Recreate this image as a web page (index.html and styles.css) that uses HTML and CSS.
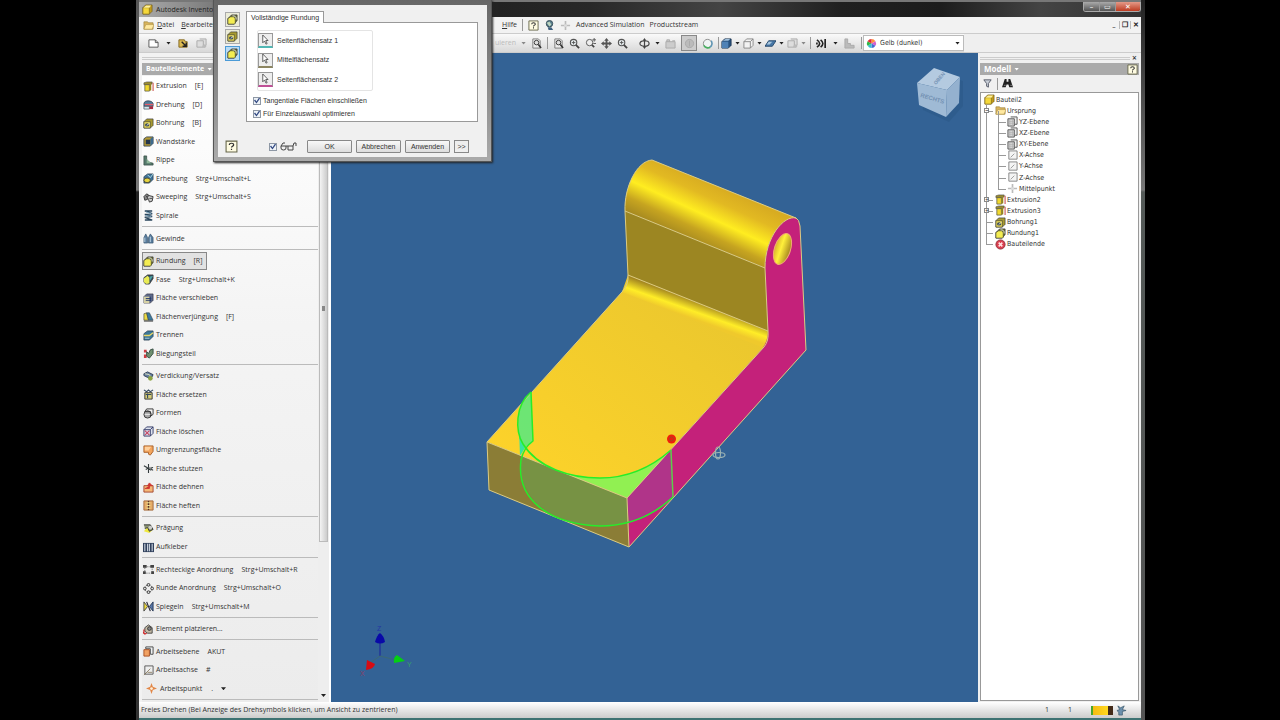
FILE: index.html
```html
<!DOCTYPE html>
<html lang="de">
<head>
<meta charset="utf-8">
<title>Autodesk Inventor</title>
<link rel="stylesheet" href="styles.css">
</head>
<body>
<svg class="defs" aria-hidden="true">
<defs>
<symbol id="box" viewBox="0 0 12 12"><path d="M1 4l3-3h7v7l-3 3H1z" fill="#c09a1c" stroke="#6b571a" stroke-width=".7"/><path d="M1 4h7v7H1z" fill="#f5d83a" stroke="#7a651c" stroke-width=".7"/><path d="M1.500 4l3-2.500h5.500L8 4z" fill="#fff29a"/></symbol>
<symbol id="extrude" viewBox="0 0 12 12"><path d="M1 2l3-1h6v2L8 4H1z" fill="#9a8c31" stroke="#444" stroke-width=".6"/><path d="M2 4h5v7H2z" fill="#f1d82e" stroke="#554" stroke-width=".8"/><path d="M7 4l2-1v7l-2 1z" fill="#98841d"/><path d="M11 2v9" stroke="#c55" stroke-width="1.200"/></symbol>
<symbol id="revolve" viewBox="0 0 12 12"><path d="M1 5c0-4 9-4 10 0v3H1z" fill="#4d7f9c" stroke="#334" stroke-width=".8"/><path d="M2 6h9" stroke="#e75d68" stroke-width="1.500"/><path d="M1 8h6v3H1z" fill="#d8e8ef" stroke="#345" stroke-width=".7"/><path d="M7 8h4v3H7z" fill="#a82b41"/></symbol>
<symbol id="hole" viewBox="0 0 12 12"><path d="M1 4l3-3h7v7l-3 3H1z" fill="#a89a30" stroke="#333" stroke-width=".7"/><path d="M1 4h7v7H1z" fill="#e6d75a" stroke="#443" stroke-width=".7"/><ellipse cx="4.500" cy="7.500" rx="2.300" ry="1.900" fill="#394958"/><path d="M4 8l3-2" stroke="#fff" stroke-width=".8"/></symbol>
<symbol id="shell" viewBox="0 0 12 12"><path d="M1 3l3-2h7v7l-3 3H1z" fill="#b59b36" stroke="#2d3b48" stroke-width=".9"/><path d="M3 4h5v5H3z" fill="#24364b"/><path d="M8 3l3-2v7L8 11z" fill="#3d6a8e"/></symbol>
<symbol id="rib" viewBox="0 0 12 12"><path d="M1 1h3v5l3 2 4 1v2H1z" fill="#55796c" stroke="#354b44" stroke-width=".8"/><path d="M4 4l5 5H4z" fill="#8fb79a"/></symbol>
<symbol id="loft" viewBox="0 0 12 12"><path d="M1 4l4-3h6v6l-4 4H1z" fill="#3d7298" stroke="#2a3e50" stroke-width=".8"/><ellipse cx="4.500" cy="8" rx="3.500" ry="2.500" fill="#e6d540" stroke="#443"/><path d="M5 2l3 3 3-4" fill="none" stroke="#b8e0e8"/></symbol>
<symbol id="sweep" viewBox="0 0 12 12"><path d="M1 5l3-3 3 2-2 4-3 1z" fill="#888" stroke="#333"/><path d="M4 5l3-1 4 1-1 5-3 1-1-3z" fill="#ccc" stroke="#333"/><path d="M7 7h3M3 4l2 2" stroke="#444"/></symbol>
<symbol id="coil" viewBox="0 0 12 12"><path d="M10 1H2l8 3-8 1 8 2-8 1 8 3H2" fill="none" stroke="#28445b" stroke-width="1.600"/><path d="M3 2l6 2M3 6l6 1" stroke="#87b0c8"/></symbol>
<symbol id="thread" viewBox="0 0 12 12"><path d="M1 11V5l2-4 2 4v6zM6 11V5l2-4 3 4v6z" fill="#587c9d" stroke="#34516b" stroke-width=".7"/><path d="M2 5v5M8 4v6" stroke="#bfd4e2"/></symbol>
<symbol id="fillet" viewBox="0 0 12 12"><path d="M1 5l4-4h6v6l-3 4H1z" fill="#6f7436" stroke="#333" stroke-width=".8"/><path d="M1 5l3-2h3l2 2v5l-1 1H1z" fill="#f4ed52" stroke="#443" stroke-width=".7"/><path d="M6 2c4 0 4 2 4 4" fill="none" stroke="#eee"/></symbol>
<symbol id="chamfer" viewBox="0 0 12 12"><path d="M1 4l4-3h6v4l-4 6H3l-2-2z" fill="#34495a" stroke="#333" stroke-width=".8"/><path d="M1 5l4-3 2 2v6l-3 1-3-2z" fill="#e9eb54"/><path d="M7 3l4-1-3 5z" fill="#48a1a3"/></symbol>
<symbol id="move" viewBox="0 0 12 12"><path d="M1 4l3-3h7v7l-3 3H1z" fill="#5e6a8a" stroke="#334" stroke-width=".7"/><path d="M1 4h6v7H1z" fill="#d5d0a4"/><path d="M3 6h6M3 8h6M8 4v5" stroke="#263c6b"/></symbol>
<symbol id="draft" viewBox="0 0 12 12"><path d="M1 10V3l3-1 2 8z" fill="#e9d946" stroke="#443" stroke-width=".7"/><path d="M4 2h3l4 8H6z" fill="#3c7b9e" stroke="#345" stroke-width=".7"/><path d="M1 11h10" stroke="#333"/></symbol>
<symbol id="split" viewBox="0 0 12 12"><path d="M1 4l4-3h6v6l-4 4H1z" fill="#3a7798" stroke="#263e53" stroke-width=".8"/><path d="M1 6h6l4-3" stroke="#e7d665" stroke-width="1.500" fill="none"/><path d="M2 9h5" stroke="#afc8d6"/></symbol>
<symbol id="bend" viewBox="0 0 12 12"><path d="M1 2h3v3H1zM1 7h3v4H1z" fill="#ce3d42"/><path d="M4 4l2 2 2-4 3-1v5l-4 5-3-2z" fill="#6e8f6f" stroke="#354b41"/></symbol>
<symbol id="thicken" viewBox="0 0 12 12"><path d="M1 3l4-2 6 3-2 4-4-1-4-2z" fill="#657da0" stroke="#2d3d52"/><path d="M2 3l5 1 3 6" stroke="#dce3bb" fill="none"/><circle cx="8" cy="8" r="2.500" fill="#8ca444"/></symbol>
<symbol id="replace" viewBox="0 0 12 12"><path d="M2 4h8v7H2z" fill="#d4cc78" stroke="#333"/><path d="M1 1l3 2 2-2 2 2 3-2M3 6h6M5 5v5" fill="none" stroke="#344a61" stroke-width="1.200"/></symbol>
<symbol id="form" viewBox="0 0 12 12"><circle cx="5" cy="7" r="4" fill="#aaa" stroke="#333"/><path d="M4 1h7v6l-3 2V4H2z" fill="none" stroke="#333"/><path d="M2 7h6" stroke="#eee"/></symbol>
<symbol id="delete" viewBox="0 0 12 12"><path d="M1 4l3-3h7v7l-3 3H1zM1 4h7v7M8 4l3-3" fill="#dbe0ed" stroke="#343c68"/><path d="M2 5l5 5M7 5l-5 5" stroke="#c64764" stroke-width="1.300"/></symbol>
<symbol id="patch" viewBox="0 0 12 12"><path d="M1 1h10v6l-3 4-2-1V8H1z" fill="#f3a55d" stroke="#a75f29"/><path d="M2 2h7L6 6H2z" fill="#ffd09c"/></symbol>
<symbol id="trim" viewBox="0 0 12 12"><path d="M1 3l5 3 5-1M6 1v10M3 4l6 4M3 7l4-2 4 3" fill="none" stroke="#343b3d" stroke-width="1.200"/><path d="M6 5l3-1-1 3z" fill="#aaa"/></symbol>
<symbol id="extend" viewBox="0 0 12 12"><path d="M1 4h10v7H1z" fill="#f5b878" stroke="#a3442e"/><path d="M2 7h5V4M5 4l2-3 3 3z" fill="#cf342f" stroke="#cf342f"/></symbol>
<symbol id="stitch" viewBox="0 0 12 12"><path d="M1 1h10v10H1z" fill="#e5ad68" stroke="#a16538"/><path d="M6 1v10" stroke="#543027" stroke-width="1.500"/><path d="M4 3h4M4 6h4M4 9h4" stroke="#f3eb99"/></symbol>
<symbol id="emboss" viewBox="0 0 12 12"><path d="M1 9l5-6 5 4-4 4z" fill="#eee83d"/><path d="M1 2h7l3 5-4 2-2-4-3 1" fill="#8d9678" stroke="#333"/><circle cx="8" cy="5" r="2" fill="#ccc"/></symbol>
<symbol id="decal" viewBox="0 0 12 12"><path d="M0 1h12v10H0z" fill="#31415d"/><path d="M2 2v8M5 2v8M7 2v8M10 2v8" stroke="#cdd5e0" stroke-width="1.200"/></symbol>
<symbol id="rect" viewBox="0 0 12 12"><path d="M2 3h8v7H2z" fill="none" stroke="#777" stroke-dasharray="1.500 1"/><path d="M0 1h4v3H0zM8 1h4v3H8zM0 8h3v3H0zM9 8h3v3H9z" fill="#444"/></symbol>
<symbol id="circular" viewBox="0 0 12 12"><circle cx="6" cy="6" r="4" fill="none" stroke="#444" stroke-dasharray="2 1"/><g fill="#ddd" stroke="#333"><circle cx="6" cy="2" r="1.500"/><circle cx="10" cy="6" r="1.500"/><circle cx="6" cy="10" r="1.500"/><circle cx="2" cy="6" r="1.500"/></g></symbol>
<symbol id="mirror" viewBox="0 0 12 12"><path d="M1 1l4 5-4 5z" fill="#f0dc3d" stroke="#444"/><path d="M11 1L7 6l4 5z" fill="#5776a8" stroke="#263955"/><path d="M4 1l4 10" stroke="#223" stroke-width="1.200"/></symbol>
<symbol id="place" viewBox="0 0 12 12"><path d="M2 4l4-3 4 3v6H5L2 8z" fill="#c7bca6" stroke="#444"/><circle cx="7" cy="5" r="2" fill="#888" stroke="#333"/><path d="M1 6v5M0 9l2 2 2-1" stroke="#c22" fill="none" stroke-width="1.300"/></symbol>
<symbol id="plane" viewBox="0 0 12 12"><path d="M3 1h8v8H8V3H3z" fill="#edf1f2" stroke="#444"/><path d="M1 4h6v7H1z" fill="#f1a263" stroke="#a64e20"/></symbol>
<symbol id="axis" viewBox="0 0 12 12"><path d="M2 1h9v9H2z" fill="#eee" stroke="#555"/><path d="M1 11l7-7M5 8h5" stroke="#764" stroke-width=".8"/></symbol>
<symbol id="point" viewBox="0 0 12 12"><path d="M6 0l1.500 4L12 6 7.500 7.500 6 12 4.500 7.500 0 6l4.500-2z" fill="#e28748"/><circle cx="6" cy="6" r="1.500" fill="#fff0d8"/></symbol>
<symbol id="gplane" viewBox="0 0 12 12"><path d="M4 1h7v8H8" fill="#eee" stroke="#555"/><path d="M1 3h7v8H1z" fill="#d3d3d3" stroke="#555"/><path d="M3 3v8M6 3v8M1 6h7M1 8h7" stroke="#aaa" stroke-width=".6"/></symbol>
<symbol id="gaxis" viewBox="0 0 12 12"><path d="M2 1h9v9H2z" fill="#f4f4f4" stroke="#666" stroke-width=".8"/><path d="M4 8l4-4" stroke="#999"/></symbol>
<symbol id="plus" viewBox="0 0 12 12"><path d="M6 1v10M1 6h10" stroke="#bbb" stroke-width="1.800"/><circle cx="6" cy="6" r="1.500" fill="#ddd"/></symbol>
<symbol id="folder" viewBox="0 0 12 12"><path d="M1 2h4l1 1h5v7H1z" fill="#d9b45c" stroke="#99803b" stroke-width=".7"/><path d="M1 10l2-5h9l-2 5z" fill="#ffe9a0" stroke="#a78a42" stroke-width=".6"/></symbol>
<symbol id="end" viewBox="0 0 12 12"><circle cx="6" cy="6" r="5" fill="#dc4050" stroke="#91313b"/><path d="M4 4l4 4M8 4l-4 4" stroke="#ffe2e2" stroke-width="1.700"/></symbol>
<symbol id="help" viewBox="0 0 12 12"><path d="M1 1h10v10H1z" fill="#fffce2" stroke="#66664a"/><path d="M4 4.500c0-2 4-2 4 0 0 1.300-2 1-2 2.500M6 8v1.200" fill="none" stroke="#333" stroke-width="1.100"/></symbol>
<symbol id="page" viewBox="0 0 12 12"><path d="M1 2h7l3 3v5H1z" fill="#fff" stroke="#555"/><path d="M8 2v3h3" fill="none" stroke="#555"/></symbol>
<symbol id="open" viewBox="0 0 12 12"><path d="M1 2h6l1 2h2v6H1z" fill="#ddbb52" stroke="#80651e"/><path d="M4 4l5 5M9 5v4H5" fill="none" stroke="#222" stroke-width="1.500"/></symbol>
<symbol id="globe" viewBox="0 0 12 12"><circle cx="6" cy="4" r="3.500" fill="#5b8190" stroke="#334a55"/><path d="M3 3l3-1 2 3-2 2z" fill="#bfd6c0"/><path d="M4 8h4l2 3H5z" fill="#3e5f7f"/></symbol>
<symbol id="zoomer" viewBox="0 0 12 12"><circle cx="5" cy="5" r="3.500" fill="#e9eff1" stroke="#555" stroke-width="1.200"/><path d="M7.500 7.500L11 11" stroke="#444" stroke-width="2"/><path d="M3 5h4M5 3v4" stroke="#555"/></symbol>
<symbol id="zoomplus" viewBox="0 0 12 12"><circle cx="5" cy="5" r="3.500" fill="#eee" stroke="#555"/><path d="M7.500 7.500L10 10" stroke="#444" stroke-width="1.800"/><path d="M8 2h4M10 0v4M9 6h3" stroke="#555"/></symbol>
<symbol id="zoompage" viewBox="0 0 12 12"><path d="M2 1h6l2 2v8H2z" fill="#ececec" stroke="#777"/><circle cx="6" cy="5" r="2.500" fill="#ddd" stroke="#333"/><path d="M8 7l3 4" stroke="#333" stroke-width="1.700"/></symbol>
<symbol id="pan" viewBox="0 0 12 12"><path d="M6 0l2.500 3H7v2h2V3.500L12 6 9 8.500V7H7v2h1.500L6 12 3.500 9H5V7H3v1.500L0 6l3-2.500V5h2V3H3.500z" fill="#555"/></symbol>
<symbol id="orbit" viewBox="0 0 12 12"><path d="M6 1v10M1 6c0-4 10-4 10 0S1 10 1 6" fill="none" stroke="#444" stroke-width="1.300"/><path d="M4 3l2-3 2 3zM4 9l2 3 2-3z" fill="#444"/></symbol>
<symbol id="camera" viewBox="0 0 12 12"><path d="M1 4h10v7H1zM2 4V2h3v2M8 3h3" fill="#ccc" stroke="#aaa"/></symbol>
<symbol id="ring" viewBox="0 0 12 12"><circle cx="6" cy="6" r="4.500" fill="#bbb" stroke="#aaa"/><path d="M6 3v6" stroke="#aaa"/></symbol>
<symbol id="sphere" viewBox="0 0 12 12"><circle cx="6" cy="6" r="4.500" fill="#eff4f4" stroke="#888"/><path d="M2 8a5 5 0 0 0 7 2" fill="none" stroke="#48af61" stroke-width="1.800"/><path d="M9 10a5 5 0 0 0 1-7" fill="none" stroke="#5995b8" stroke-width="1.500"/></symbol>
<symbol id="cube" viewBox="0 0 12 12"><path d="M1 4l3-3h7v7l-3 3H1z" fill="#28527f" stroke="#1d3652"/><path d="M1 4h7v7H1z" fill="#4f82b6"/><path d="M2 3l3-2h5L8 3z" fill="#a0c0dc"/></symbol>
<symbol id="wire" viewBox="0 0 12 12"><path d="M1 4l3-3h7v7l-3 3H1zM1 4h7v7M8 4l3-3" fill="#f2f2f2" stroke="#888"/></symbol>
<symbol id="sheet" viewBox="0 0 12 12"><path d="M4 3h8L8 9H0z" fill="#4677a7" stroke="#26486b"/><path d="M4 4h4L5 7H2z" fill="#abc8df"/></symbol>
<symbol id="gray" viewBox="0 0 12 12"><path d="M1 3h7v7H1zM4 1h7v7H8" fill="#ddd" stroke="#aaa"/><circle cx="9" cy="9" r="2" fill="#bbb"/></symbol>
<symbol id="waves" viewBox="0 0 12 12"><path d="M1 2q6 4 0 8M5 2q5 4 0 8M1 5v2M10 1v10" fill="none" stroke="#222" stroke-width="1.800"/></symbol>
<symbol id="steps" viewBox="0 0 12 12"><path d="M1 1h3v5h3v2h4v3H1z" fill="#bbb" stroke="#aaa"/></symbol>
<symbol id="wheel" viewBox="0 0 12 12"><path d="M6 6V1a5 5 0 0 1 4.300 2.500z" fill="#ff923b"/><path d="M6 6l4.300-2.500a5 5 0 0 1 0 5z" fill="#d45fce"/><path d="M6 6l4.300 2.500A5 5 0 0 1 6 11z" fill="#4668d2"/><path d="M6 6v5a5 5 0 0 1-4.300-2.500z" fill="#38bfd0"/><path d="M6 6L1.700 8.500a5 5 0 0 1 0-5z" fill="#32b847"/><path d="M6 6L1.700 3.500A5 5 0 0 1 6 1z" fill="#e72b36"/></symbol>
<symbol id="funnel" viewBox="0 0 12 12"><path d="M2 2h8L7 6v4L5 9V6z" fill="#c9cfd8" stroke="#555a68"/></symbol>
<symbol id="binoc" viewBox="0 0 12 12"><path d="M3 1h2v3h2V1h2l3 9H8L7 7H5l-1 3H0z" fill="#222"/><path d="M2 8h2M9 8h2" stroke="#888"/></symbol>
<symbol id="pick" viewBox="0 0 12 12"><path d="M3 0v8.500l2-2 1.500 3.500 1.300-.6L6.300 6h2.500z" fill="#fff" stroke="#333" stroke-width=".8"/></symbol>
<symbol id="glasses" viewBox="0 0 18 11"><path d="M1 5h5v2q0 2-2.500 2T1 7zM8 5h5v4H8zM6 5h2M1 5l2-3h2M13 5l1-3h2M16 2v3" fill="none" stroke="#444"/></symbol>
<symbol id="people" viewBox="0 0 12 12"><path d="M2 1l3 2 4-2-2 4 4 1-4 1v4H3V8L1 6l3-1z" fill="#6c90ac" stroke="#345166" stroke-width=".7"/></symbol>
<linearGradient id="roll" gradientUnits="userSpaceOnUse" x1="720" y1="187" x2="693" y2="245"><stop offset="0" stop-color="#d8ac21"/><stop offset=".22" stop-color="#e2b922"/><stop offset=".5" stop-color="#ffed20"/><stop offset=".75" stop-color="#c6a420"/><stop offset="1" stop-color="#a08420"/></linearGradient>
<linearGradient id="neck" gradientUnits="userSpaceOnUse" x1="700" y1="302" x2="694" y2="319"><stop offset="0" stop-color="#a38620"/><stop offset=".6" stop-color="#ffed27"/><stop offset="1" stop-color="#efc92c"/></linearGradient>
<linearGradient id="plate" x1="1" y1="0" x2="0" y2="1"><stop offset="0" stop-color="#e7c52f"/><stop offset="1" stop-color="#ffd429"/></linearGradient>
<linearGradient id="bore"><stop offset="0" stop-color="#d9b42c"/><stop offset=".4" stop-color="#fff03b"/><stop offset="1" stop-color="#a6871f"/></linearGradient>
</defs>
</svg>
<main class="desktop">
<div class="window">
<header class="titlebar"><span class="caption"><svg class="ic"><use href="#box"/></svg>Autodesk Inventor</span>
<div class="winctl"><button aria-label="Minimieren">–</button><button aria-label="Maximieren">▭</button><button class="close" aria-label="Schließen">✕</button></div></header>
<nav class="menubar">
<div class="menu-start"><svg class="ic"><use href="#folder"/></svg><button><u>D</u>atei</button><button><u>B</u>earbeiten</button></div>
<div class="menu-rest"><button><u>H</u>ilfe</button><i class="vsep"></i><button aria-label="Hilfe öffnen"><svg class="ic"><use href="#help"/></svg></button><button aria-label="Web"><svg class="ic"><use href="#globe"/></svg></button><button aria-label="Hinzufügen"><svg class="ic"><use href="#plus"/></svg></button><button>Advanced Simulation</button><button>Productstream</button></div>
<div class="docctl"><button aria-label="Dokument minimieren">_</button><i class="vsep"></i><button aria-label="Dokument wiederherstellen">❐</button><i class="vsep"></i><button aria-label="Dokument schließen">✕</button></div>
</nav>
<div class="toolbar">
<div class="tools-start"><button aria-label="Neu"><svg class="ic"><use href="#page"/></svg></button><i class="arrow"></i><button aria-label="Öffnen"><svg class="ic"><use href="#open"/></svg></button><button aria-label="Speichern"><svg class="ic"><use href="#gray"/></svg></button><button aria-label="Rückgängig"><svg class="ic"><use href="#cube"/></svg></button></div>
<div class="tools-view"><span class="faded">uieren</span><i class="arrow dim"></i><button aria-label="Auswahl"><svg class="ic"><use href="#zoompage"/></svg></button><i class="vsep"></i>
<button aria-label="Alles zoomen"><svg class="ic"><use href="#zoompage"/></svg></button><button aria-label="Fenster zoomen"><svg class="ic"><use href="#zoomer"/></svg></button><button aria-label="Zoom"><svg class="ic"><use href="#zoomplus"/></svg></button><button aria-label="Pan"><svg class="ic"><use href="#pan"/></svg></button><button aria-label="Auswahl zoomen"><svg class="ic"><use href="#zoomer"/></svg></button></div>
<div class="tools-more"><button aria-label="Drehen"><svg class="ic"><use href="#orbit"/></svg></button><i class="arrow"></i><button aria-label="Ansicht"><svg class="ic"><use href="#camera"/></svg></button><button class="pressed" aria-label="Freies Drehen"><svg class="ic"><use href="#ring"/></svg></button><button aria-label="Kugel"><svg class="ic"><use href="#sphere"/></svg></button><i class="vsep"></i></div>
<div class="tools-style"><button aria-label="Schattiert"><svg class="ic"><use href="#cube"/></svg></button><i class="arrow"></i><button aria-label="Drahtkörper"><svg class="ic"><use href="#wire"/></svg></button><i class="arrow"></i><button aria-label="Schatten"><svg class="ic"><use href="#sheet"/></svg></button><i class="arrow"></i><button aria-label="Komponenten"><svg class="ic"><use href="#gray"/></svg></button><i class="arrow dim"></i></div><i class="vsep"></i>
<div class="tools-end"><button aria-label="Analyse"><svg class="ic"><use href="#waves"/></svg></button><i class="arrow"></i><button aria-label="Stufen"><svg class="ic"><use href="#steps"/></svg></button><i class="vsep"></i></div>
<label class="color"><svg class="ic"><use href="#wheel"/></svg><select aria-label="Farbe"><option>Gelb (dunkel)</option></select><i class="arrow"></i></label>
</div>
<div class="work">
<aside class="features">
<div class="grip"></div><h2>Bauteilelemente<i class="arrow light"></i></h2>
<div class="feature-body"><div class="feature-list">
<button><svg class="ic"><use href="#extrude"/></svg>Extrusion<kbd>[E]</kbd></button>
<button><svg class="ic"><use href="#revolve"/></svg>Drehung<kbd>[D]</kbd></button>
<button><svg class="ic"><use href="#hole"/></svg>Bohrung<kbd>[B]</kbd></button>
<button><svg class="ic"><use href="#shell"/></svg>Wandstärke</button>
<button><svg class="ic"><use href="#rib"/></svg>Rippe</button>
<button><svg class="ic"><use href="#loft"/></svg>Erhebung<kbd>Strg+Umschalt+L</kbd></button>
<button><svg class="ic"><use href="#sweep"/></svg>Sweeping<kbd>Strg+Umschalt+S</kbd></button>
<button><svg class="ic"><use href="#coil"/></svg>Spirale</button>
<hr>
<button><svg class="ic"><use href="#thread"/></svg>Gewinde</button>
<hr>
<button class="active"><svg class="ic"><use href="#fillet"/></svg>Rundung<kbd>[R]</kbd></button>
<button><svg class="ic"><use href="#chamfer"/></svg>Fase<kbd>Strg+Umschalt+K</kbd></button>
<button><svg class="ic"><use href="#move"/></svg>Fläche verschieben</button>
<button><svg class="ic"><use href="#draft"/></svg>Flächenverjüngung<kbd>[F]</kbd></button>
<button><svg class="ic"><use href="#split"/></svg>Trennen</button>
<button><svg class="ic"><use href="#bend"/></svg>Biegungsteil</button>
<hr>
<button><svg class="ic"><use href="#thicken"/></svg>Verdickung/Versatz</button>
<button><svg class="ic"><use href="#replace"/></svg>Fläche ersetzen</button>
<button><svg class="ic"><use href="#form"/></svg>Formen</button>
<button><svg class="ic"><use href="#delete"/></svg>Fläche löschen</button>
<button><svg class="ic"><use href="#patch"/></svg>Umgrenzungsfläche</button>
<button><svg class="ic"><use href="#trim"/></svg>Fläche stutzen</button>
<button><svg class="ic"><use href="#extend"/></svg>Fläche dehnen</button>
<button><svg class="ic"><use href="#stitch"/></svg>Fläche heften</button>
<hr>
<button><svg class="ic"><use href="#emboss"/></svg>Prägung</button>
<button><svg class="ic"><use href="#decal"/></svg>Aufkleber</button>
<hr>
<button><svg class="ic"><use href="#rect"/></svg>Rechteckige Anordnung<kbd>Strg+Umschalt+R</kbd></button>
<button><svg class="ic"><use href="#circular"/></svg>Runde Anordnung<kbd>Strg+Umschalt+O</kbd></button>
<button><svg class="ic"><use href="#mirror"/></svg>Spiegeln<kbd>Strg+Umschalt+M</kbd></button>
<hr>
<button><svg class="ic"><use href="#place"/></svg>Element platzieren...</button>
<hr>
<button><svg class="ic"><use href="#plane"/></svg>Arbeitsebene<kbd>AKUT</kbd></button>
<button><svg class="ic"><use href="#axis"/></svg>Arbeitsachse<kbd>#</kbd></button>
<button class="indent"><svg class="ic"><use href="#point"/></svg>Arbeitspunkt<kbd>.</kbd><i class="arrow"></i></button>
<hr>
</div><div class="scroll"><div class="thumb"></div><i class="arrow"></i></div></div>
</aside>
<section class="viewport" aria-label="Modellansicht">
<svg viewBox="331 53 647 649" role="img" aria-label="3D-Bauteil">
<g stroke-linejoin="round" stroke-width="1">
<path d="M622 292L487 442L627 498L764 347L768 331L628 275Z" fill="url(#plate)"/>
<path d="M625 211L765 268L768 333L628 277Z" fill="#9c8622"/>
<path d="M628 275L768 331Q769 341 764 348L622 292Q629 283 628 275Z" fill="url(#neck)"/>
<path d="M625 211C624 187 637 161 652 160L796 218C780 223 765 243 765 268Z" fill="url(#roll)"/>
<path d="M765 268C765 237 784 215 796 218Q799 219 800 226L806 350L629 547L627 498L762 349Q768 341 768 331Z" fill="#c4217a"/>
<path d="M487 442L627 498L629 547L489 490Z" fill="#8b7d36"/>
<path d="M531 392C516 405 515 431 524 446Q530 447 533 441Z" fill="#55e981" opacity=".85"/>
<path d="M519 430Q520 440 525 448L520 456Z" fill="#36e5a0"/>
<path d="M548 467Q575 478 600 478Q640 478 671 450L627 498Z" fill="#91f052"/>
<path d="M521 456C516 497 548 524 600 526Q616 526 629 523L627 498Z" fill="#779244"/>
<path d="M627 498L671 450L673 497Q655 516 629 523Z" fill="#b03489"/>
<g fill="none" stroke="#dccb82"><path d="M622 292L487 442L627 498L764 347Q769 341 768 331L765 268C765 237 784 215 796 218Q799 219 800 226L806 350L629 547L627 498M487 442L489 490L629 547M625 211L765 268M628 275L768 331M622 292Q629 284 628 275L625 211C624 187 637 161 652 160L796 218"/></g>
<g fill="none" stroke="#26ed2a" stroke-width="1.500"><path d="M531 392C515 405 515 431 523 444C538 468 570 478 600 478C630 478 654 465 671 450"/><path d="M531 392L533 441Q524 447 521 460C516 499 548 524 600 526C635 526 657 512 673 497"/><path d="M671 450L673 497" stroke="#5ecb4c"/></g>
<ellipse cx="782.500" cy="249" rx="8" ry="16" transform="rotate(18 782.500 249)" fill="url(#bore)" stroke="#f1aa73"/>
</g>
<circle cx="671.500" cy="439" r="4.500" fill="#ef1f0c"/><circle cx="671.500" cy="439" r="2" fill="none" stroke="#a4481d"/>
<g fill="none" stroke="#9cb3b4" stroke-width="1.200"><ellipse cx="719" cy="455" rx="6" ry="2.500"/><ellipse cx="718" cy="453" rx="2.500" ry="6"/></g>
<g><path d="M917 84L934 69L960 78L960 103L946 119L920 107Z" fill="#24527f" opacity=".35" transform="translate(3 3)"/><path d="M917 83L934 68L960 77L947 90Z" fill="#b4cae0"/><path d="M917 83L947 90L946 117L919 105Z" fill="#9fbad5"/><path d="M947 90L960 77L959 103L946 117Z" fill="#94b1cf"/>
<g font-family="Liberation Sans, sans-serif" font-weight="bold" fill="#7391b3"><text transform="translate(920 97) rotate(16)" font-size="6">RECHTS</text><text transform="translate(936 85) rotate(-50)" font-size="5">OBEN</text></g></g>
<path d="M380 656V640" stroke="#1b219b"/><path d="M375 642Q377 635 380 633Q384 636 385 642Q380 645 375 642Z" fill="#0909a8"/>
<path d="M380 656L370 663M380 656L396 660" stroke="#3c6973"/>
<path d="M367 660L375 664Q374 669 366 670Z" fill="#d70b13"/><path d="M397 655L405 661L394 663Q393 657 397 655Z" fill="#05cf14"/>
<g font-family="Liberation Sans, sans-serif" font-size="7"><text x="377" y="631" fill="#2435a4">Z</text><text x="407" y="667" fill="#36a268">Y</text><text x="360" y="676" fill="#8a3f68">X</text></g>
</svg>
</section>
<aside class="model">
<div class="grip"><span>×</span></div><h2>Modell<i class="arrow light"></i><button aria-label="Hilfe"><svg class="ic"><use href="#help"/></svg></button></h2>
<div class="model-tools"><button aria-label="Filter"><svg class="ic"><use href="#funnel"/></svg></button><i class="vsep"></i><button aria-label="Suchen"><svg class="ic"><use href="#binoc"/></svg></button></div>
<div class="tree-box"><ul class="tree">
<li><svg class="ic"><use href="#box"/></svg>Bauteil2</li>
<li class="l1"><b>−</b><svg class="ic"><use href="#folder"/></svg>Ursprung</li>
<li class="l2"><svg class="ic"><use href="#gplane"/></svg>YZ-Ebene</li>
<li class="l2"><svg class="ic"><use href="#gplane"/></svg>XZ-Ebene</li>
<li class="l2"><svg class="ic"><use href="#gplane"/></svg>XY-Ebene</li>
<li class="l2"><svg class="ic"><use href="#gaxis"/></svg>X-Achse</li>
<li class="l2"><svg class="ic"><use href="#gaxis"/></svg>Y-Achse</li>
<li class="l2"><svg class="ic"><use href="#gaxis"/></svg>Z-Achse</li>
<li class="l2"><svg class="ic"><use href="#plus"/></svg>Mittelpunkt</li>
<li class="l1"><b>+</b><svg class="ic"><use href="#extrude"/></svg>Extrusion2</li>
<li class="l1"><b>+</b><svg class="ic"><use href="#extrude"/></svg>Extrusion3</li>
<li class="l1"><svg class="ic"><use href="#hole"/></svg>Bohrung1</li>
<li class="l1"><svg class="ic"><use href="#fillet"/></svg>Rundung1</li>
<li class="l1 last"><svg class="ic"><use href="#end"/></svg>Bauteilende</li>
</ul></div>
</aside>
</div>
<footer class="status"><span>Freies Drehen (Bei Anzeige des Drehsymbols klicken, um Ansicht zu zentrieren)</span><div class="counts"><span>1</span><span>1</span><i class="meter"></i><svg class="ic"><use href="#people"/></svg></div></footer>
</div>
<form class="dialog">
<div class="dialog-body">
<div class="modes"><button type="button" aria-label="Kantenrundung"><svg class="ic"><use href="#fillet"/></svg></button><button type="button" aria-label="Flächenrundung"><svg class="ic"><use href="#hole"/></svg></button><button type="button" class="on" aria-label="Vollständige Rundung"><svg class="ic"><use href="#fillet"/></svg></button></div>
<div class="tabs"><button type="button" class="tab">Vollständige Rundung</button>
<div class="tabpanel"><div class="sets">
<button type="button"><span class="pick cyan"><svg class="ic"><use href="#pick"/></svg></span>Seitenflächensatz 1</button>
<button type="button"><span class="pick olive"><svg class="ic"><use href="#pick"/></svg></span>Mittelflächensatz</button>
<button type="button"><span class="pick pink"><svg class="ic"><use href="#pick"/></svg></span>Seitenflächensatz 2</button></div>
<label><input type="checkbox" checked>Tangentiale Flächen einschließen</label>
<label><input type="checkbox" checked>Für Einzelauswahl optimieren</label></div></div>
</div>
<div class="dialog-actions"><button type="button" class="q" aria-label="Hilfe"><svg class="ic"><use href="#help"/></svg></button><label><input type="checkbox" checked aria-label="Vorschau"><svg class="glasses"><use href="#glasses"/></svg></label><button type="button" class="btn">OK</button><button type="button" class="btn">Abbrechen</button><button type="button" class="btn">Anwenden</button><button type="button" class="more">&gt;&gt;</button></div>
</form>
</main>
</body>
</html>
```
FILE: styles.css
```css
* { box-sizing: border-box; }
body { margin: 0; background: #000; color: #333; font: 7px/10px "Open Sans", "Noto Sans", sans-serif; }
button, select { font: inherit; color: inherit; border: 0; padding: 0; background: none; white-space: nowrap; }
.defs { position: absolute; width: 0; height: 0; }
.ic { width: 11px; height: 11px; flex: none; display: block; }
.desktop { position: relative; height: 100vh; min-height: 640px; margin: 0 135px 0 136px; padding: 0 4px 2px 3px; background: linear-gradient(#555, #777 190px, #222 192px, #333) left / 3px 100% no-repeat, linear-gradient(#222, #777 190px, #545a58 192px, #555) right / 4px 100% no-repeat, #3e7272; }
.window { display: flex; flex-direction: column; height: 100%; background: #eee; }
.vsep { width: 1px; height: 12px; background: #999; flex: none; }
.arrow { width: 5px; height: 3px; flex: none; background: #222; clip-path: polygon(0 0, 100% 0, 50% 100%); }
.arrow.dim { background: #888; }
.arrow.light { background: #fff; }

.titlebar { flex: 0 0 17px; display: flex; justify-content: space-between; border-top: 2px solid #777; background: linear-gradient(90deg, #aaa, #777 8%, #222 36%, #282828 45%, #444 58%, #202020 70%, #1c1c1c 80%, #444 90%, #333); }
.caption { display: flex; align-items: center; gap: 3px; padding: 0 3px; color: #222; }
.winctl { display: flex; height: 10px; border-radius: 0 0 3px 3px; overflow: hidden; border: 1px solid #aaa; border-top: 0; }
.winctl button { width: 16px; line-height: 8px; color: #fff; background: linear-gradient(#aaa, #555); border-right: 1px solid #999; }
.winctl .close { width: 24px; background: linear-gradient(#e49a88, #bd3b21); border: 0; }

.menubar { flex: 0 0 17px; display: flex; align-items: center; background: #f2f2f2; border-bottom: 1px solid #ccc; }
.menu-start { flex: 0 0 363px; display: flex; align-items: center; gap: 7px; padding-left: 4px; overflow: hidden; }
.menu-start .ic { margin-right: -4px; }
.menu-rest { display: flex; align-items: center; gap: 5px; }
.docctl { margin-left: auto; display: flex; align-items: center; gap: 2px; padding-right: 2px; }
.docctl .vsep { height: 8px; background: #bbb; }
.docctl button { width: 6px; font-weight: 700; color: #222; }

.toolbar { flex: 0 0 19px; display: flex; align-items: center; background: linear-gradient(#fafafa, #d8d8d8) left / 825px 100% no-repeat, #efefef; border-bottom: 1px solid #ccc; }
.toolbar > div { display: flex; align-items: center; }
.toolbar button { display: grid; place-items: center; height: 16px; }
.toolbar .tools-start { flex: 0 0 356px; gap: 7px; padding-left: 9px; }
.toolbar .tools-view { flex: 0 0 140px; gap: 5px; }
.faded { color: #bbb; }
.toolbar .tools-more { flex: 0 0 84px; gap: 5px; padding-left: 4px; }
.toolbar .pressed { width: 16px; border: 1px solid #888; background: #ccc; }
.toolbar .tools-style { flex: 0 0 91px; gap: 3px; padding-left: 2px; }
.toolbar .tools-end { gap: 6px; padding: 0 1px 0 5px; }
.color { flex: 0 0 101px; height: 16px; display: flex; align-items: center; gap: 3px; padding: 0 3px 0 2px; background: #fff; border: 1px solid #bbb; }
.color select { appearance: none; flex: 1; min-width: 0; font-family: "DejaVu Sans Condensed", "DejaVu Sans", sans-serif; }

.work { flex: 1; min-height: 0; display: flex; }
.features { flex: 0 0 192px; display: flex; flex-direction: column; padding-left: 3px; background: #f2f2f2; border-right: 2px solid #fff; }
.grip { flex: 0 0 10px; display: flex; align-items: center; justify-content: flex-end; background: linear-gradient(#ccc, #ccc) 0 4px / 96% 1px no-repeat, linear-gradient(#ccc, #ccc) 0 6px / 96% 1px no-repeat; }
.grip span { font-weight: 700; background: #eee; padding: 0 2px; }
h2 { flex: 0 0 12px; display: flex; align-items: center; gap: 3px; margin: 0; padding: 0 4px; background: #aaa; color: #fff; font: 700 8px/12px "Open Sans", sans-serif; }
.features h2 { margin: 0 1px 1px 0; font-size: 7px; }
.feature-body { flex: 1; min-height: 0; display: flex; background: linear-gradient(#fff, #f4f4f4 40%, #ececec); }
.feature-list { flex: 1; display: flex; flex-direction: column; padding-top: 1px; }
.feature-list button { flex: 1; min-height: 0; display: flex; align-items: center; gap: 2px; text-align: left; align-self: flex-start; border: 1px solid transparent; padding-right: 4px; }
.feature-list button.indent { padding-left: 3px; gap: 3px; }
.feature-list kbd { font: inherit; margin-left: 6px; }
.feature-list .arrow { margin-left: 5px; }
.feature-list .active { background: #e2e2e2; border-color: #888; }
.feature-list hr { flex: 0 0 1px; width: 100%; margin: 1px 0 2px; border: 0; background: #bbb; }
.scroll { flex: 0 0 11px; display: flex; flex-direction: column; align-items: center; justify-content: space-between; padding-bottom: 5px; background: #eee; }
.thumb { width: 9px; height: 75%; border: 1px solid #bbb; border-top: 0; background: linear-gradient(#888, #888) center / 3px 5px no-repeat, linear-gradient(90deg, #f4f4f4, #ccc); }

.viewport { flex: 1; min-width: 0; background: #336295; }
.viewport svg { display: block; width: 100%; height: 100%; }

.model { flex: 0 0 163px; display: flex; flex-direction: column; padding: 0 2px 1px; background: #f0f0f0; font-family: "DejaVu Sans Condensed", "DejaVu Sans", sans-serif; }
.model h2 button { margin-left: auto; margin-right: -3px; }
.model-tools { flex: 0 0 17px; display: flex; align-items: center; gap: 4px; padding-left: 2px; }
.tree-box { flex: 1; min-height: 0; background: #fff; border: 1px solid #999; overflow: hidden; }
.tree { list-style: none; margin: 0; padding: 1px 0 0 3px; height: 157px; display: grid; grid-auto-rows: 1fr; }
.tree li { position: relative; display: flex; align-items: center; gap: 1px; font-size: 7px; }
.tree li.l1 { padding-left: 11px; }
.tree li.l2 { padding-left: 23px; }
.tree .l1::before, .tree .l2::before { content: ""; position: absolute; left: 2px; top: 0; bottom: 0; border-left: 1px solid #999; }
.tree .l2::after { content: ""; position: absolute; left: 14px; top: -50%; width: 7px; height: 100%; border: solid #999; border-width: 0 0 1px 1px; }
.tree .l1::after { content: ""; position: absolute; left: 2px; top: 50%; width: 7px; border-top: 1px solid #999; }
.tree .l1.last::before { bottom: 50%; }
.tree b { position: absolute; z-index: 1; left: 0; width: 5px; height: 5px; line-height: 3px; font-size: 5px; text-align: center; background: #fff; border: 1px solid #888; }

.status { flex: 0 0 16px; display: flex; align-items: center; justify-content: space-between; padding: 0 14px 0 2px; background: linear-gradient(#fff, #ccc); }
.counts { display: flex; align-items: center; gap: 19px; }
.meter { width: 22px; height: 9px; margin-right: -16px; background: linear-gradient(90deg, #49a72b 2px, #f5bb13 2px, #ffd91f 17px, #432b1a 17px); }

.dialog { position: absolute; left: 77px; top: 0; width: 279px; padding: 5px 4px 4px; border: 1px solid #555; border-top: 0; background: linear-gradient(#666, #aaa); box-shadow: 1px 1px 2px #222; font: 7px/10px "Liberation Sans", Arial, sans-serif; }
.dialog-body { display: flex; gap: 6px; padding: 6px 9px 0 7px; background: #f0f0f0; }
.modes { display: flex; flex-direction: column; gap: 2px; padding-top: 1px; }
.modes button { width: 15px; height: 15px; display: grid; place-items: center; border: 1px solid #aaa; background: #ececd8; }
.modes .on { background: #b9dcf5; border-color: #4b9bd7; }
.tabs { flex: 1; }
.tab { display: block; position: relative; height: 12px; padding: 0 4px; margin-bottom: -1px; border: 1px solid #999; border-bottom: 0; background: #fff; }
.tabpanel { height: 100px; padding: 7px 6px 0; display: flex; flex-direction: column; align-items: flex-start; border: 1px solid #999; background: #fff; }
.sets { width: 116px; height: 61px; margin: 0 0 3px 4px; padding: 2px 0 3px; display: flex; flex-direction: column; justify-content: space-between; border: 1px solid #e4e4e4; border-radius: 2px; }
.sets button { display: flex; align-items: center; gap: 4px; text-align: left; }
.pick { width: 15px; height: 15px; display: grid; place-items: center; background: #eee; border: 1px solid #999; border-bottom-width: 2px; }
.cyan { border-bottom-color: #51b7b4; }
.olive { border-bottom-color: #8c8560; }
.pink { border-bottom-color: #bf5096; }
label { display: flex; align-items: center; gap: 2px; }
.tabpanel label { height: 13px; }
input { appearance: none; flex: none; width: 8px; height: 8px; margin: 0; border: 1px solid #8e98a5; background: #eef3f8; }
input:checked::before { content: ""; display: block; width: 6px; height: 6px; background: #334a83; clip-path: polygon(0 50%, 18% 35%, 40% 65%, 85% 0, 100% 15%, 42% 100%); }
.dialog-actions { display: flex; align-items: center; gap: 4px; padding: 18px 18px 4px 7px; background: #f0f0f0; }
.q { margin-right: auto; }
.q .ic { width: 13px; height: 13px; }
.glasses { width: 18px; height: 11px; }
.dialog-actions label { margin-right: 5px; gap: 3px; }
.btn { width: 45px; height: 13px; border: 1px solid #888; border-radius: 1px; background: linear-gradient(#f8f8f8, #ddd); }
.more { width: 15px; height: 13px; border: 1px solid #888; background: #eee; }
```
